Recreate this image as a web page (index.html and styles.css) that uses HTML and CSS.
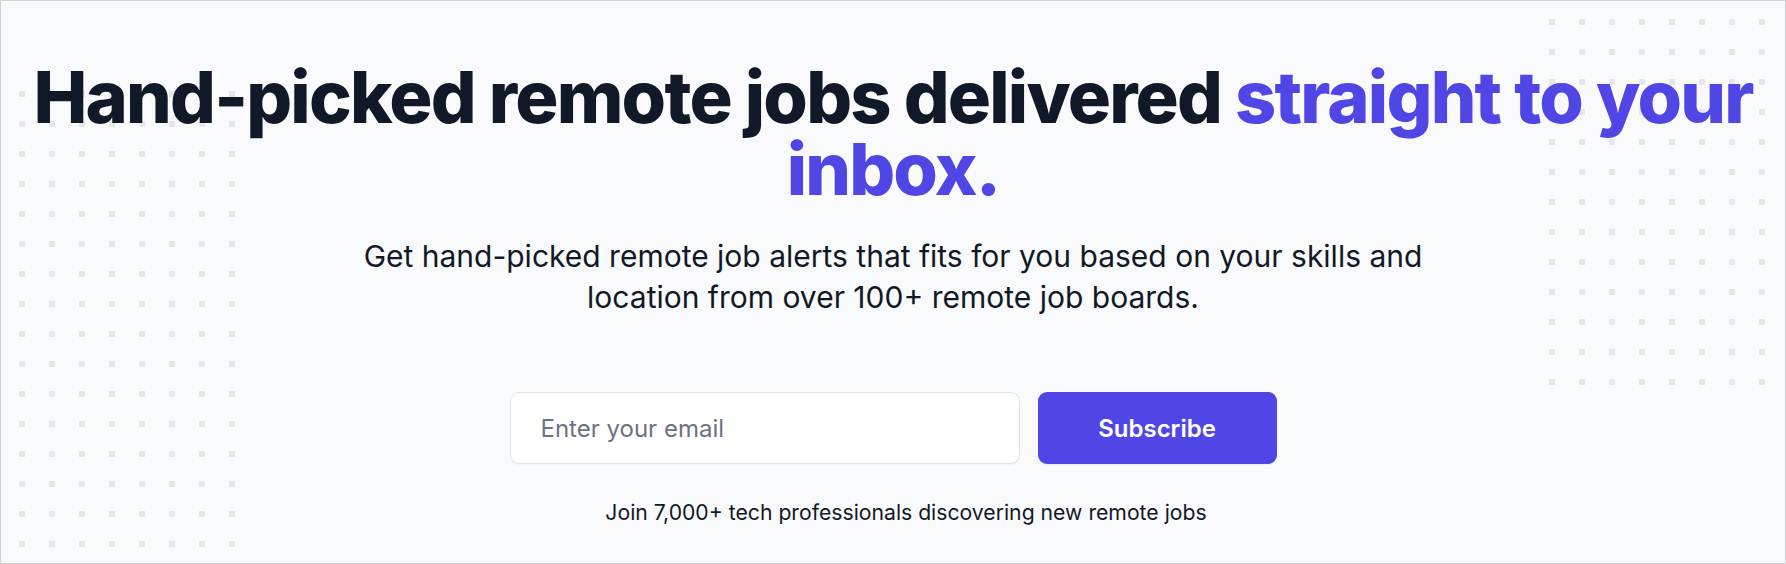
FILE: index.html
```html
<!DOCTYPE html>
<html lang="en">
<head>
<meta charset="utf-8">
<title>Remote jobs newsletter</title>
<link rel="stylesheet" href="styles.css">
</head>
<body>
<div class="page">
  <svg class="dots dots-left" width="240" height="480" aria-hidden="true">
    <defs>
      <pattern id="dl" x="0" y="0" width="30" height="30" patternUnits="userSpaceOnUse">
        <rect width="6" height="6" fill="#e5e7eb"/>
      </pattern>
    </defs>
    <rect width="240" height="480" fill="url(#dl)"/>
  </svg>
  <svg class="dots dots-right" width="240" height="390" aria-hidden="true">
    <defs>
      <pattern id="dr" x="0" y="0" width="30" height="30" patternUnits="userSpaceOnUse">
        <rect width="6" height="6" fill="#e5e7eb"/>
      </pattern>
    </defs>
    <rect width="240" height="390" fill="url(#dr)"/>
  </svg>

  <main class="hero">
    <h1 class="title">Hand-picked remote jobs delivered <span class="accent">straight to your inbox.</span></h1>
    <p class="lead">Get hand-picked remote job alerts that fits for you based on your skills and location from over 100+ remote job boards.</p>
    <form class="signup" onsubmit="return false">
      <input class="email" type="email" placeholder="Enter your email">
      <button class="btn" type="submit">Subscribe</button>
    </form>
    <p class="note">Join 7,000+ tech professionals discovering new remote jobs</p>
  </main>
</div>
</body>
</html>
```

FILE: styles.css
```css
* { box-sizing: border-box; }

html, body {
  margin: 0;
  padding: 0;
}

body {
  font-family: Inter, "Noto Sans", "Liberation Sans", sans-serif;
  background: #f9fafb;
  color: #111827;
}

.page {
  position: relative;
  width: 1786px;
  height: 564px;
  overflow: hidden;
  border: 1px solid #cfd0d3;
  background: #f9fafb;
}

.dots {
  position: absolute;
  z-index: 0;
}

.dots-left {
  left: 18px;
  top: 90px;
}

.dots-right {
  left: 1548px;
  top: 18px;
}

.hero {
  position: relative;
  z-index: 1;
  display: flex;
  flex-direction: column;
  align-items: center;
  padding-top: 60px;
  text-align: center;
}

.title {
  margin: 0;
  max-width: 1760px;
  font-size: 72px;
  line-height: 72px;
  font-weight: 800;
  letter-spacing: -1.8px;
  color: #111827;
}

.accent {
  color: #4f46e5;
}

.lead {
  margin: 31px 0 0;
  max-width: 1100px;
  font-size: 30px;
  line-height: 41px;
  font-weight: 400;
  color: #111827;
}

.signup {
  display: flex;
  gap: 18px;
  margin-top: 74px;
}

.email {
  width: 510px;
  height: 72px;
  padding: 0 30px;
  border: 1.5px solid #e2e3e7;
  border-radius: 9px;
  background: #ffffff;
  font-family: inherit;
  font-size: 24px;
  color: #111827;
  outline: none;
  box-shadow: 0 1px 2px rgba(0, 0, 0, 0.04);
}

.email::placeholder {
  color: #6b7280;
}

.btn {
  width: 239px;
  height: 72px;
  border: none;
  border-radius: 9px;
  background: #4f46e5;
  color: #ffffff;
  font-family: inherit;
  font-size: 24px;
  font-weight: 600;
  cursor: pointer;
  box-shadow: 0 1px 2px rgba(0, 0, 0, 0.06);
}

.note {
  margin: 33px 0 0 26px;
  font-size: 21.2px;
  line-height: 30px;
  color: #111827;
}
```
